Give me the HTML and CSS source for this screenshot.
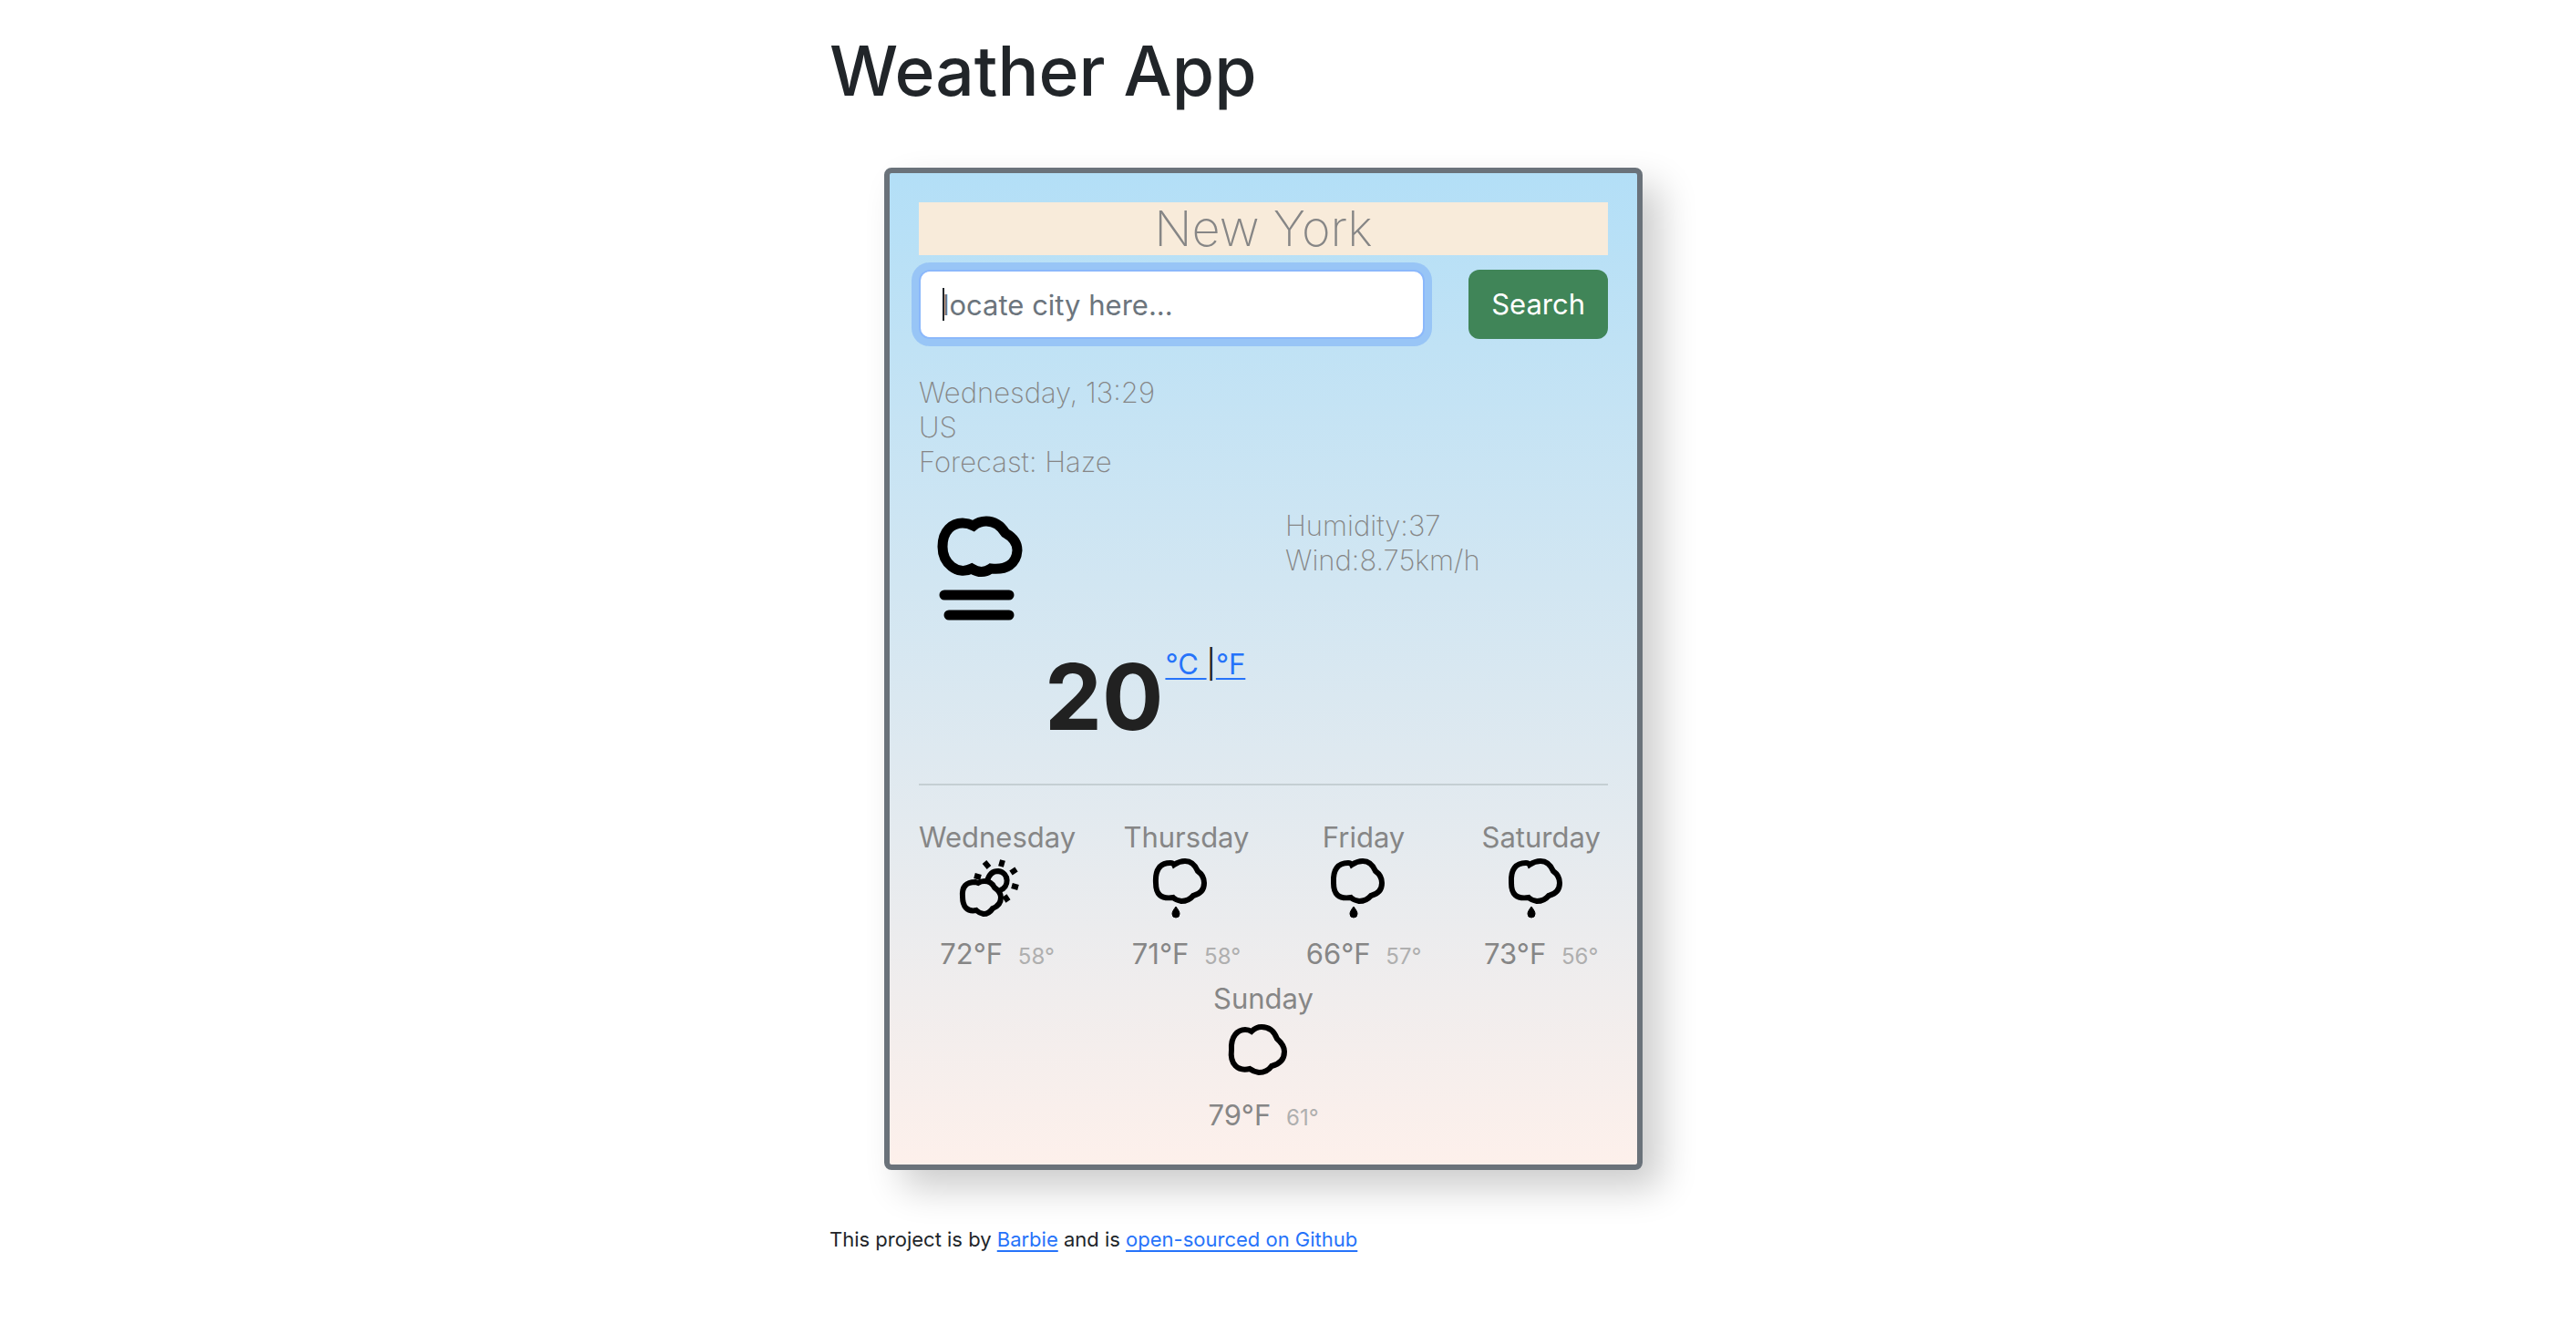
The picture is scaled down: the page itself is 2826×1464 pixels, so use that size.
FILE: index.html
```
<!DOCTYPE html>
<html lang="en">
<head>
<meta charset="utf-8">
<meta name="viewport" content="width=device-width, initial-scale=1">
<title>Weather App</title>
<link rel="stylesheet" href="styles.css">
</head>
<body>
<svg class="symbols" aria-hidden="true">
  <symbol id="rain" viewBox="0 0 84 84">
    <path class="line" d="M9 31C8 16 14 9 25 9Q28 9 29 11Q35 7 41 7C48 7 52 11 55 18Q62 23 62 31C62 39 58 43 50 45Q45 51 37 51Q31 50 28 47C14 49 9 43 9 31Z"/>
    <path class="solid" d="M31 57C34 61 35 63 35 65A4 4 0 0 1 27 65C27 63 28 61 31 57Z"/>
  </symbol>
  <symbol id="partly" viewBox="0 0 84 84">
    <path class="line" d="M4 46C3 35 8 30 18 30L21 31Q24 29 28 29C34 29 37 32 39 36Q46 41 46 47C46 54 42 57 37 59Q33 65 27 65Q22 64 19 61C9 63 4 57 4 46Z"/>
    <path class="line" d="M31 29C33 21 38 18 43 18C56 20 55 36 45 39"/>
    <path class="line" d="M28 8L33 14M48 6L46 13M63 16L57 20M58 34L65 36M50 45L54 51M17 23L24 25"/>
  </symbol>
  <symbol id="cloud" viewBox="0 0 84 84">
    <path class="line" d="M7 37C6 22 14 15 22 15Q26 15 29 17Q34 12 40 12C48 12 54 17 57 25Q65 32 65 39C65 49 59 53 51 55Q46 62 37 62Q31 61 27 58C14 61 5 53 7 37Z"/>
  </symbol>
</svg>
<main class="page">
  <h1 class="title">Weather App</h1>
  <section class="card">
    <h2 class="city">New York</h2>
    <form class="search">
      <input class="search-box" type="search" placeholder="locate city here..." aria-label="City" autocomplete="off">
      <button class="search-button" type="button">Search</button>
    </form>
    <ul class="details">
      <li>Wednesday, 13:29</li>
      <li>US</li>
      <li>Forecast: Haze</li>
    </ul>
    <div class="current">
      <svg class="current-icon" viewBox="0 0 120 128" role="img" aria-label="Haze">
        <path class="heavy" d="M26 42C26 24 37 16 48 16Q54 16 60 19Q66 14 74 14C83 14 90 19 95 27C104 32 108 38 108 46C107 61 96 68 79 66Q69 73 58 66C42 74 26 60 26 42Z"/>
        <path class="heavy" d="M28 95H99M33 117H99"/>
      </svg>
      <ul class="wind">
        <li>Humidity:37</li>
        <li>Wind:8.75km/h</li>
      </ul>
    </div>
    <div class="temperature">
      <strong class="degrees">20</strong>
      <span class="units"><a href="#c">°C </a>|<a href="#f">°F</a></span>
    </div>
    <hr class="rule">
    <div class="forecast">
      <div class="day"><div>Wednesday</div><svg class="day-icon"><use href="#partly"/></svg><div class="range">72°F <span class="low">58°</span></div></div>
      <div class="day"><div>Thursday</div><svg class="day-icon"><use href="#rain"/></svg><div class="range">71°F <span class="low">58°</span></div></div>
      <div class="day"><div>Friday</div><svg class="day-icon"><use href="#rain"/></svg><div class="range">66°F <span class="low">57°</span></div></div>
      <div class="day"><div>Saturday</div><svg class="day-icon"><use href="#rain"/></svg><div class="range">73°F <span class="low">56°</span></div></div>
      <div class="day"><div>Sunday</div><svg class="day-icon"><use href="#cloud"/></svg><div class="range">79°F <span class="low">61°</span></div></div>
    </div>
  </section>
  <footer class="credit">This project is by <a href="#barbie">Barbie</a> and is <a href="#github">open-sourced on Github</a></footer>
</main>
</body>
</html>
```
FILE: styles.css
```
* { box-sizing: border-box; }

body {
  margin: 0;
  background: #fff;
  color: #212529;
  font: 400 31px/38px Inter, "Liberation Sans", sans-serif;
}

a { color: #2673fa; text-decoration-thickness: 2px; text-underline-offset: 4px; }
ul { margin: 0; padding: 0; list-style: none; }

.symbols { display: none; }
.line { fill: none; stroke: #000; stroke-width: 6px; }
.solid { fill: #000; stroke: #000; stroke-width: 1px; }
.heavy { fill: none; stroke: #000; stroke-width: 11px; stroke-linecap: round; }

.page { max-width: 1006px; margin: 0 auto; padding: 30px 0; }
.title { margin: 0; font-size: 75px; line-height: 96px; font-weight: 500; }

.card {
  max-width: 832px;
  margin: 58px 60px;
  padding: 32px;
  border: 6px solid #6a727a;
  border-radius: 8px;
  background: linear-gradient(#b3dff7, #fdf0eb);
  box-shadow: 20px 20px 40px rgba(0, 0, 0, .2);
  color: #868686;
}

.city {
  margin: 0 0 16px;
  background: #f8ebda;
  font-size: 54px;
  line-height: 58px;
  font-weight: 200;
  text-align: center;
}

.search { display: flex; gap: 48px; margin-bottom: 40px; }
.search-box {
  flex: 1;
  min-width: 0;
  height: 76px;
  padding: 0 24px;
  border: 2px solid #8bb8fb;
  border-radius: 12px;
  outline: 0;
  background: linear-gradient(#212529, #212529) 24px 50% / 2px 36px no-repeat #fff;
  box-shadow: 0 0 0 8px #98c5f6;
  font: inherit;
  appearance: none;
}
.search-box::placeholder { color: #6c757d; opacity: 1; }
.search-button {
  padding: 0 25px;
  border: 0;
  border-radius: 12px;
  background: #408558;
  color: #fff;
  font: inherit;
}

.details, .wind { font-weight: 200; }
.current { display: grid; grid-template-columns: 1fr 1fr; column-gap: 48px; margin-top: 32px; }
.current-icon { width: 120px; height: 128px; }

.temperature { display: flex; gap: 2px; padding: 24px 138px 0; color: #212121; }
.degrees { font-size: 100px; line-height: 110px; font-weight: 700; }
.units { white-space: pre; }

.rule { margin: 40px 0 38px; border: 0; border-top: 2px solid #c5cfd3; }

.forecast { display: flex; flex-wrap: wrap; row-gap: 8px; margin: 0 -24px; text-align: center; }
.day { flex: 1 0 0; padding: 0 24px; }
.day-icon { display: block; width: 84px; height: 84px; margin: 0 auto 6px; }
.range { white-space: nowrap; }
.low { margin-left: 8px; font-size: 24px; color: #afafaf; }

.credit { font-size: 22px; line-height: 36px; }
```
